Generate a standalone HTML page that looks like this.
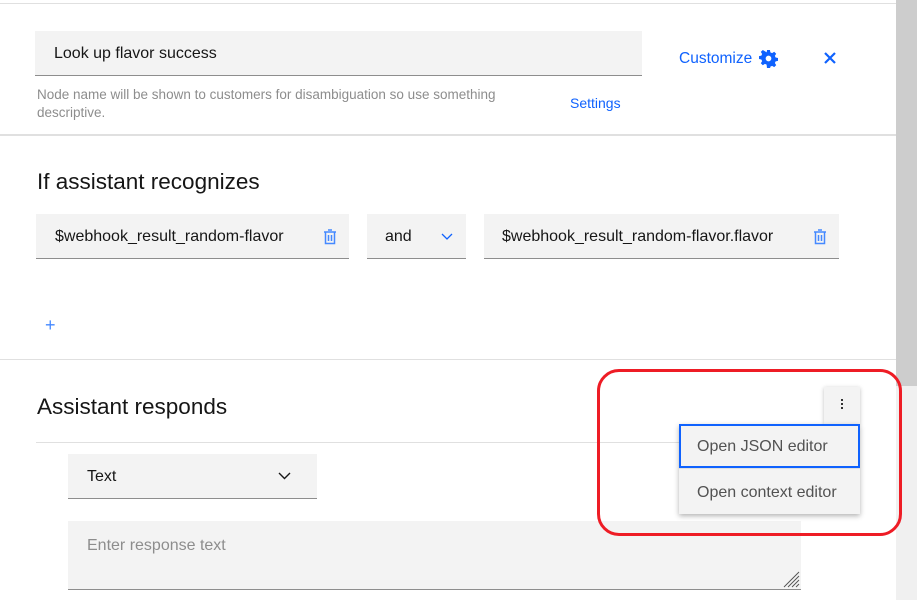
<!DOCTYPE html>
<html><head><style>
*{box-sizing:border-box;margin:0;padding:0}
body{width:924px;height:612px;background:#fff;font-family:"Liberation Sans",sans-serif;position:relative;overflow:hidden;color:#161616}
.a{position:absolute}
.f{background:#f3f3f3;border-bottom:1px solid #8d8d8d;font-size:16px;display:flex;align-items:center;padding-top:2px}
</style></head><body>
<div class="a" style="left:0;top:3px;width:896px;height:1px;background:#e0e0e0"></div>
<div class="a f" style="left:35px;top:31px;width:607px;height:45px;padding-left:19px">Look up flavor success</div>
<div class="a" style="left:37px;top:86px;font-size:13.5px;color:#8d8d8d;line-height:18px;width:505px">Node name will be shown to customers for disambiguation so use something descriptive.</div>
<div class="a" style="left:570px;top:95px;font-size:14px;color:#0f62fe">Settings</div>
<div class="a" style="left:679px;top:50px;font-size:15.5px;color:#0f62fe">Customize</div>
<svg class="a" style="left:759px;top:49px" width="19" height="19" viewBox="0 0 20 20"><path fill="#0f62fe" d="M8.5 1h3l.5 2.5 1.8.8 2.2-1.4 2.1 2.1-1.4 2.2.8 1.8 2.5.5v3l-2.5.5-.8 1.8 1.4 2.2-2.1 2.1-2.2-1.4-1.8.8-.5 2.5h-3L8 16.5l-1.8-.8-2.2 1.4-2.1-2.1 1.4-2.2-.8-1.8L0 10.5v-3l2.5-.5.8-1.8-1.4-2.2L4 1l2.2 1.4L8 3.6zM10 7a3 3 0 100 6 3 3 0 000-6z"/></svg>
<svg class="a" style="left:824px;top:52px" width="12" height="12" viewBox="0 0 12 12"><path d="M1 1L11 11M11 1L1 11" stroke="#0f62fe" stroke-width="2.2"/></svg>
<div class="a" style="left:0;top:134px;width:896px;height:2px;background:#e0e0e0"></div>
<div class="a" style="left:37px;top:169px;font-size:22.5px">If assistant recognizes</div>
<div class="a f" style="left:36px;top:214px;width:313px;height:45px;padding-left:19px">$webhook_result_random-flavor</div>
<svg class="a" style="left:323px;top:229px" width="14" height="16" viewBox="0 0 14 16"><path d="M1 3h12M5 1h4M2.5 3.5v11h9v-11M5.5 6v6M8.5 6v6" stroke="#4589ff" stroke-width="1.5" fill="none"/></svg>
<div class="a f" style="left:367px;top:214px;width:99px;height:45px;padding-left:18px">and</div>
<svg class="a" style="left:441px;top:233px" width="12" height="8" viewBox="0 0 12 8"><path d="M1 1l5 5 5-5" stroke="#0f62fe" stroke-width="1.3" fill="none"/></svg>
<div class="a f" style="left:484px;top:214px;width:355px;height:45px;padding-left:18px">$webhook_result_random-flavor.flavor</div>
<svg class="a" style="left:813px;top:229px" width="14" height="16" viewBox="0 0 14 16"><path d="M1 3h12M5 1h4M2.5 3.5v11h9v-11M5.5 6v6M8.5 6v6" stroke="#4589ff" stroke-width="1.5" fill="none"/></svg>
<div class="a" style="left:45px;top:318px;font-size:18px;color:#4589ff;line-height:14px">+</div>
<div class="a" style="left:0;top:359px;width:896px;height:1px;background:#e0e0e0"></div>
<div class="a" style="left:37px;top:394px;font-size:22.5px">Assistant responds</div>
<div class="a" style="left:36px;top:442px;width:824px;height:1px;background:#e0e0e0"></div>
<div class="a f" style="left:68px;top:454px;width:249px;height:45px;padding-left:19px">Text</div>
<svg class="a" style="left:278px;top:472px" width="13" height="8" viewBox="0 0 13 8"><path d="M1 1l5.5 5.5L12 1" stroke="#161616" stroke-width="1.4" fill="none"/></svg>
<div class="a" style="left:68px;top:521px;width:733px;height:69px;background:#f3f3f3;border-bottom:1px solid #8d8d8d;padding:16px 19px;font-size:16px;color:#8d8d8d">Enter response text</div>
<svg class="a" style="left:782px;top:570px" width="18" height="18" viewBox="0 0 18 18"><path d="M2 17L17 2M6 17L17 6M10 17L17 10M14 17L17 14" stroke="#555" stroke-width="1"/></svg>
<div class="a" style="left:896px;top:0;width:21px;height:600px;background:#f0f0f0"></div>
<div class="a" style="left:896px;top:0;width:21px;height:386px;background:#cdcdcd"></div>
<div class="a" style="left:824px;top:387px;width:36px;height:37px;background:#f3f3f3;box-shadow:0 1px 4px rgba(0,0,0,.25)"></div>
<div class="a" style="left:841px;top:399px;width:2px;height:2px;background:#333;box-shadow:0 4px 0 #333,0 8px 0 #333"></div>
<div class="a" style="left:679px;top:424px;width:181px;height:90px;background:#f3f3f3;box-shadow:0 2px 5px rgba(0,0,0,.3)">
<div style="height:44px;border:2px solid #0f62fe;padding:2px 16px 0;display:flex;align-items:center;font-size:16px;color:#525252">Open JSON editor</div>
<div style="height:46px;border-top:1px solid #e0e0e0;padding:2px 18px 0;display:flex;align-items:center;font-size:16px;color:#525252">Open context editor</div>
</div>
<div class="a" style="left:597px;top:369px;width:305px;height:167px;border:3px solid #ee1c25;border-radius:22px"></div>
</body></html>
